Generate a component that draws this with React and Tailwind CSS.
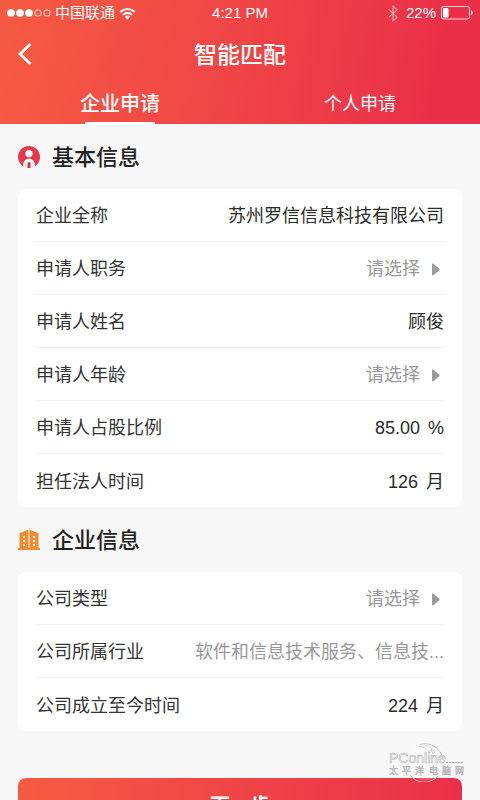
import React from 'react';

const basicFields = [
  { id: 'company', label: '企业全称', value: '苏州罗信信息科技有限公司' },
  { id: 'position', label: '申请人职务', type: 'select' },
  { id: 'name', label: '申请人姓名', value: '顾俊' },
  { id: 'age', label: '申请人年龄', type: 'select' },
  { id: 'share', label: '申请人占股比例', value: '85.00', unit: '%' },
  { id: 'tenure', label: '担任法人时间', value: '126', unit: '月' },
];

const companyFields = [
  { id: 'kind', label: '公司类型', type: 'select' },
  { id: 'industry', label: '公司所属行业', value: '软件和信息技术服务、信息技...', muted: true },
  { id: 'founded', label: '公司成立至今时间', value: '224', unit: '月' },
];

function StatusBar() {
  return (
    <div className="grid h-[26px] grid-cols-[1fr_auto_1fr] items-center px-[6px] text-[15px] leading-5">
      <div className="flex items-center gap-1">
        <svg width="45" height="10" viewBox="0 0 45 10" fill="white" stroke="white" aria-hidden="true">
          <circle cx="5" cy="5" r="3.5" />
          <circle cx="14" cy="5" r="3.5" />
          <circle cx="23" cy="5" r="3.5" />
          <circle cx="32" cy="5" r="3.2" fill="none" strokeWidth="0.8" />
          <circle cx="41" cy="5" r="3.2" fill="none" strokeWidth="0.8" />
        </svg>
        <span>中国联通</span>
        <svg width="17" height="13" viewBox="0 0 17 13" fill="none" stroke="white" strokeWidth="1.9" aria-hidden="true">
          <path d="M1.2 5.1a10.4 10.4 0 0 1 14.6 0" />
          <path d="M3.9 7.9a6.5 6.5 0 0 1 9.2 0" />
          <path d="M8.5 12.4 5.9 9.8a3.7 3.7 0 0 1 5.2 0z" fill="white" stroke="none" />
        </svg>
      </div>
      <span className="font-medium">4:21 PM</span>
      <div className="flex items-center justify-end">
        <svg className="mr-2 opacity-60" width="10" height="17" viewBox="0 0 10 17" fill="none" stroke="white" strokeWidth="1.1" aria-hidden="true">
          <path d="M.8 4.6 9 12.2 5 16V1l4 3.8L.8 12.4" />
        </svg>
        <span>22%</span>
        <svg className="ml-[5px]" width="33" height="14" viewBox="0 0 33 14" fill="none" aria-hidden="true">
          <rect x="0.5" y="0.5" width="28" height="12.5" rx="2" stroke="white" strokeOpacity="0.8" />
          <rect x="2" y="2" width="5.5" height="9.5" rx="0.8" fill="white" />
          <path d="M30 4.5c2.2.6 2.2 4 0 4.6z" fill="white" />
        </svg>
      </div>
    </div>
  );
}

function PersonIcon() {
  return (
    <svg width="22" height="22" viewBox="0 0 22 22" aria-hidden="true">
      <circle cx="11" cy="11" r="11" fill="#e8384b" />
      <circle cx="11" cy="7.6" r="3.6" fill="white" />
      <path d="M5.2 21v-2.600a5.800 5.800 0 0 1 11.600 0V21l-2.400 1.200V18.400a3.400 3.400 0 0 0-6.800 0v3.800z" fill="white" />
      <path d="M9.600 22v-4.600a1.400 1.400 0 0 1 2.800 0V22z" fill="#d8323f" />
      <path d="M7.600 22v-4a3.400 3.400 0 0 1 6.800 0v4h-1.800v-4.500a1.600 1.600 0 0 0-3.200 0V22z" fill="white" />
    </svg>
  );
}

function BuildingIcon() {
  return (
    <svg width="22" height="22" viewBox="0 0 22 22" fill="#f28c33" aria-hidden="true">
      <path d="M1.500 4.200 10.500.4V20h-9zM11.500.4l9 3.800V20h-9z" />
      <path d="M0 19h22v2H0z" />
      <path
        d="M5 7h2v2H5zM5 11h2v2H5zM5 15h2v2H5zM15 7h2v2h-2zM15 11h2v2h-2zM15 15h2v2h-2z"
        fill="#fff6ec"
      />
    </svg>
  );
}

function Field({ field }) {
  return (
    <div className="flex h-[53px] items-center border-b border-[#f1f1f2] pt-[2px] text-[18px] leading-7 last:border-b-0">
      <label htmlFor={field.id} className="shrink-0 text-[#333]">
        {field.label}
      </label>
      {field.type === 'select' ? (
        <div className="flex flex-1 items-center justify-end gap-3 pr-1">
          <select id={field.id} className="appearance-none bg-transparent text-[#999] outline-none [field-sizing:content]">
            <option>请选择</option>
          </select>
          <svg width="8" height="13" viewBox="0 0 9 14" fill="#9b9b9b" aria-hidden="true">
            <path d="M0 1.3C0 .3.9 0 1.6.6l6.600 5.600c.6.5.6 1.100 0 1.600l-6.600 5.600C.9 14 0 13.700 0 12.700z" />
          </svg>
        </div>
      ) : (
        <input
          id={field.id}
          defaultValue={field.value}
          className={`min-w-0 flex-1 bg-transparent text-right outline-none ${field.muted ? 'text-[#999]' : 'text-[#2b2b2b]'}`}
        />
      )}
      {field.unit && <span className="ml-2 text-[#2b2b2b]">{field.unit}</span>}
    </div>
  );
}

function Section({ icon, title, fields }) {
  return (
    <section>
      <div className="flex h-[65px] items-center gap-3">
        {icon}
        <h2 className="pt-[2px] text-[22px] font-medium leading-8 text-[#222]">{title}</h2>
      </div>
      <div className="rounded-lg bg-white px-[18px]">
        {fields.map((field) => (
          <Field key={field.id} field={field} />
        ))}
      </div>
    </section>
  );
}

function Watermark() {
  return (
    <div className="pointer-events-none absolute right-[14px] bottom-[18px] h-10 w-[78px]" aria-hidden="true">
      <svg className="h-full w-full" viewBox="0 0 78 40" fontFamily="'Liberation Sans', 'Noto Sans CJK SC', sans-serif">
        <circle cx="38" cy="20" r="18.5" fill="white" fillOpacity="0.2" />
        <path d="M32 2.500a18 18 0 0 1 23 16M22 33a18 18 0 0 0 28 1" fill="none" stroke="#c9c9cb" />
        <path d="M31 4h11l2 4-3 1-4-3zM43 7l4 3-2 2z" fill="white" stroke="#c9c9cc" strokeWidth="0.7" />
        <g fill="#fafafa" stroke="#b8b8bb" strokeWidth="0.6">
          <text x="1" y="21" fontSize="14">PConline</text>
          <text x="1 14 27 41 54 67" y="32" fontSize="9">太平洋电脑网</text>
        </g>
        <path d="M58 20.500h18" stroke="#b8b8bb" strokeDasharray="2 1" />
      </svg>
    </div>
  );
}

export default function App() {
  return (
    <div className="relative h-screen overflow-hidden bg-[#f7f7f8] font-['Liberation_Sans','Noto_Sans_CJK_SC',sans-serif]">
      <div className="h-full overflow-y-auto [scrollbar-width:none]">
        <header className="bg-linear-[100deg] from-[#f55b42] via-[#f04446] to-[#ea3049] to-90% text-white">
          <StatusBar />
          <div className="grid h-14 grid-cols-[1fr_auto_1fr] items-center px-[18px]">
            <button type="button" aria-label="返回" className="justify-self-start">
              <svg width="14" height="22" viewBox="0 0 14 22" fill="none" stroke="white" strokeWidth="2.8" aria-hidden="true">
                <path d="M12.500 1 2 11l10.500 10" />
              </svg>
            </button>
            <h1 className="pt-[2px] text-[23px] font-medium leading-8">智能匹配</h1>
          </div>
          <nav className="grid h-[42px] grid-cols-2">
            <button type="button" className="flex flex-col items-center justify-end text-[20px] font-medium leading-9">
              企业申请
              <span className="h-[2px] w-[70px] rounded-full bg-white" />
            </button>
            <button type="button" className="pt-[2px] text-[18px] leading-10">
              个人申请
            </button>
          </nav>
        </header>
        <form className="px-[18px] pb-6">
          <Section icon={<PersonIcon />} title="基本信息" fields={basicFields} />
          <Section icon={<BuildingIcon />} title="企业信息" fields={companyFields} />
          <button
            type="button"
            className="mt-[47px] h-14 w-full rounded-lg bg-linear-to-r from-[#f55b42] via-[#f04446] to-[#ea3049] text-[20px] font-bold leading-8 text-white"
          >
            下一步
          </button>
        </form>
      </div>
      <Watermark />
    </div>
  );
}
